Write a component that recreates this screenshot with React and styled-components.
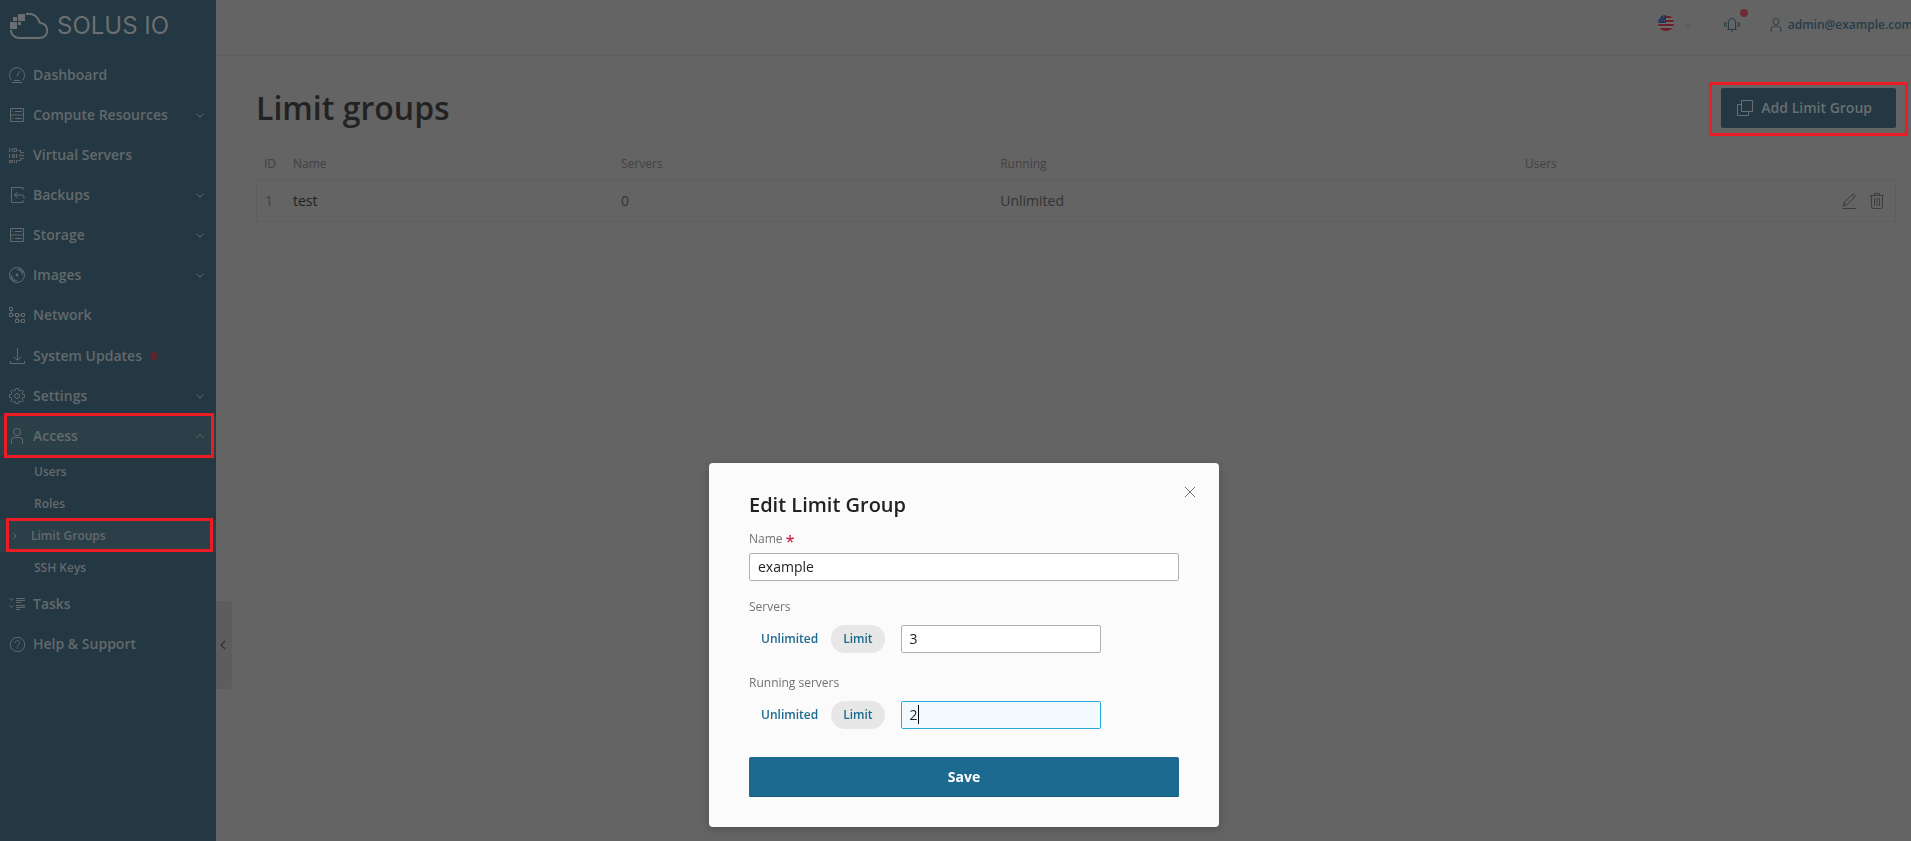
import React from 'react';
import styled, { createGlobalStyle, css } from 'styled-components';

const GlobalStyles = createGlobalStyle`
  :root {
    --page: #646464;
    --line: #5e5e5e;
    --dark-text: #222222;
    --body-text: #333333;
    --muted: #424242;
    --sidebar: #233842;
    --sidebar-active: #2b3f49;
    --sidebar-text: #64696c;
    --header-text: #263d48;
    --accent: #1c6a90;
    --mark: #ed1c24;
  }
  * {
    box-sizing: border-box;
  }
  body {
    margin: 0;
    background: var(--page);
    color: var(--body-text);
    font-family: 'Open Sans', 'Noto Sans', sans-serif;
    font-size: 14px;
    line-height: 20px;
    overflow: hidden;
  }
  button, input {
    font: inherit;
  }
  button {
    border: 0;
    padding: 0;
    background: none;
    color: inherit;
  }
  a {
    color: inherit;
    text-decoration: none;
  }
  ul {
    list-style: none;
    margin: 0;
    padding: 0;
  }
`;

const LayoutStyles = styled.div`
  display: flex;
  min-height: 100vh;
`;

/* ---------- icons ---------- */

const Svg = styled.svg`
  display: block;
  flex: none;
  fill: none;
  stroke: currentColor;
  stroke-width: 1;
`;

function Icon({ name, size = 16 }) {
  return (
    <Svg width={size} height={size} viewBox="0 0 16 16" aria-hidden="true">
      {icons[name]}
    </Svg>
  );
}

const rack = (
  <>
    <path d="M1.5 1.5h13v13h-13z" />
    <path d="M2 7h12v2H2z" fill="currentColor" stroke="none" opacity=".45" />
    <path d="M3 4.5h1M6 4.5h7M3 11.5h1M6 11.5h7" />
  </>
);

const icons = {
  dashboard: (
    <>
      <path d="M2.600 13.400A7.500 7.500 0 1 1 13.400 13.400M3 15.500h10M5 13.500h6" />
      <path d="M8 8.600 11 4" />
      <path d="M8 8.500h1" />
    </>
  ),
  compute: rack,
  storage: rack,
  servers: (
    <>
      <path d="M.5 1v4M3 1v4M5 1.500h2.500v3H5zM.5 7v4M3.500 7.500h2v3h-2zM7.500 7v4M.5 13.500h3v2h-3zM5.500 13v3M7.500 13v3" />
      <path d="M9 3.500h2.500v2H15M9 13.500h2.500v-2H15" />
      <path d="M9.500 8.500H15" strokeWidth="2" opacity=".6" />
    </>
  ),
  backups: (
    <>
      <path d="M14 3V.5H2.500v15H14V13" />
      <path d="M8.500 5 5.500 8l3 3M5.500 8H13a2 2 0 0 1 2 2v1.500" />
    </>
  ),
  images: (
    <>
      <circle cx="8" cy="8" r="7.5" />
      <circle cx="8" cy="8" r="1" fill="currentColor" />
      <path d="M8 2.500a5.500 5.500 0 0 1 5.500 5.500M10 1.500a7 7 0 0 1 4 4.500M8 13.500A5.500 5.500 0 0 1 2.500 8M6 14.500a7 7 0 0 1-4-4.500" />
    </>
  ),
  network: (
    <path d="M.5.5h3v3h-3zM.5 6.500h3v3h-3zM6.500 6.500h3v3h-3zM12.500 6.500h3v3h-3zM6.500 12.500h3v3h-3zM12.500 12.500h3v3h-3zM2 4v2M4 8h2M10 8h2M8 10v2M10 14h2" />
  ),
  updates: <path d="M8.500 0v12M4.500 8.500l4 4 4-4M1.500 13v2.500h14V13" />,
  settings: (
    <>
      <circle cx="8" cy="8" r="2.5" />
      <path d="M6.700.500h2.600l.4 2 1.200.5 1.700-1.100 1.600 1.600L13.100 5.200l.5 1.200 1.900.3v2.600l-1.900.4-.5 1.200 1.100 1.700-1.600 1.600-1.700-1.100-1.200.5-.4 1.900H6.700l-.4-1.900-1.200-.5-1.700 1.100-1.600-1.600 1.100-1.700-.5-1.200-1.900-.4V6.700l1.900-.3.5-1.200L1.800 3.500l1.600-1.600L5.100 3l1.200-.5z" />
    </>
  ),
  user: (
    <>
      <ellipse cx="8" cy="4" rx="3.5" ry="3.6" />
      <path d="M2.500 16v-3.500a3 3 0 0 1 3-3h5a3 3 0 0 1 3 3V16" />
    </>
  ),
  tasks: (
    <>
      <path d="M.5 2.500 2.500 4.500l2-2M.5 9.500l2 2 2-2" />
      <path d="M7 2.500h9M7 4.500h9M7 6.500h5M7 9.500h9M7 11.500h9M7 13.500h4" />
    </>
  ),
  help: (
    <>
      <circle cx="8.500" cy="8.500" r="7.2" />
      <path d="M6.300 6.800a2.200 2.200 0 1 1 3.400 1.800c-.8.5-1.200.8-1.200 1.700M8.500 11.300v1.300" />
    </>
  ),
  chevronDown: <path d="m4.500 6.500 3.500 3.500 3.500-3.500" />,
  chevronUp: <path d="M4.500 10 8 6.500l3.500 3.500" />,
  chevronRight: <path d="m6.500 5.500 2.500 2.500-2.500 2.500" />,
  chevronLeft: <path d="M9 4 5 8l4 4" strokeWidth="1.3" />,
  bell: (
    <>
      <path d="M3 12.500h10M4.500 12.500V5.500A3.500 3.500 0 0 1 8 1.500a3.500 3.500 0 0 1 3.500 4v7M7 14h2" />
      <path d="M2.500 5q-1 2.500 0 5M.7 5.500q-.6 2 0 4M13.500 5q1 2.500 0 5M15.300 5.500q.6 2 0 4" />
    </>
  ),
  copy: <path d="M4.500.5h11v11h-11zM4 4.500H.5v11h11V12" />,
  pencil: (
    <path d="M1.500 15.500h14M2 13l1-3.500L12 .8 14.500 3.300 5.500 12zM3 9.500 5.500 12M10.500 2.300 13 4.800" />
  ),
  trash: (
    <path d="M1 2.500h14M5.500 2.500v-2h5v2M2.500 3v10.500a2 2 0 0 0 2 2h7a2 2 0 0 0 2-2V3M5.500 5v8M8 5v8M10.500 5v8" />
  ),
  close: <path d="m3 3 10 10M13 3 3 13" />,
};

/* ---------- sidebar ---------- */

// red frame drawn round the parts that the reader has to click
const marked = css`
  position: relative;
  &::after {
    content: '';
    position: absolute;
    border: 3px solid var(--mark);
    pointer-events: none;
  }
`;

const SidebarStyles = styled.aside`
  flex: none;
  position: relative;
  width: 216px;
  background: var(--sidebar);
  color: var(--sidebar-text);
`;

const Logo = styled.a`
  display: flex;
  align-items: center;
  gap: 8px;
  height: 55px;
  padding: 0 0 4px 10px;
  color: #6b6f71;
  font-family: Inter, sans-serif;
  font-size: 24px;
  font-weight: 400;
`;

const itemStyles = css`
  display: flex;
  align-items: center;
  width: 100%;
  font-weight: 600;
  text-align: left;
`;

const NavItem = styled.a`
  ${itemStyles}
  gap: 8px;
  height: ${({ $tall }) => ($tall ? 41 : 40)}px;
  padding: 0 8px 0 9px;
  .chevron {
    margin-left: auto;
  }
  ${({ $active }) =>
    $active &&
    css`
      ${marked}
      background: var(--sidebar-active);
      &::after {
        inset: -3px 2px -2px 4px;
      }
    `}
`;

const SubItem = styled.a`
  ${itemStyles}
  height: 32px;
  padding-left: 34px;
  font-size: 12px;
  ${({ $active }) =>
    $active &&
    css`
      ${marked}
      gap: 8px;
      padding-left: 7px;
      background: var(--sidebar-active);
      &::after {
        inset: -2px 3px 0 6px;
      }
    `}
`;

const UpdateDot = styled.span`
  width: 8px;
  height: 8px;
  border-radius: 50%;
  background: #57262f;
`;

const CollapseButton = styled.button`
  position: absolute;
  top: 601px;
  left: 100%;
  width: 16px;
  height: 88px;
  border-radius: 0 4px 4px 0;
  background: #5d5d5d;
  color: #303030;
`;

const menu = [
  { label: 'Dashboard', icon: 'dashboard' },
  { label: 'Compute Resources', icon: 'compute', chevron: 'chevronDown' },
  { label: 'Virtual Servers', icon: 'servers' },
  { label: 'Backups', icon: 'backups', chevron: 'chevronDown' },
  { label: 'Storage', icon: 'storage', chevron: 'chevronDown' },
  { label: 'Images', icon: 'images', chevron: 'chevronDown' },
  { label: 'Network', icon: 'network' },
  { label: 'System Updates', icon: 'updates', dot: true },
  { label: 'Settings', icon: 'settings', chevron: 'chevronDown' },
  {
    label: 'Access',
    icon: 'user',
    chevron: 'chevronUp',
    active: true,
    children: ['Users', 'Roles', 'Limit Groups', 'SSH Keys'],
  },
  { label: 'Tasks', icon: 'tasks' },
  { label: 'Help & Support', icon: 'help' },
];

function Sidebar() {
  return (
    <SidebarStyles>
      <Logo href="#">
        <Svg width="39" height="28" viewBox="0 0 39 28" aria-hidden="true">
          <path
            d="M16 1.900C23 .600 28 4.500 29.500 10.500C34.500 11.500 37.200 14.500 37.200 18.500C37.200 23 34 26 29.500 26H9.500C4.500 26 1 22.500 1 18"
            strokeWidth="2"
          />
          <path
            d="M8 2h7v7H8zM3 5h4v4H3zM0 10h7v7H0zM8 10h3v3H8z"
            fill="currentColor"
            stroke="none"
          />
        </Svg>
        <span>SOLUS IO</span>
      </Logo>
      <nav>
        <ul>
          {menu.map((item) => (
            <li key={item.label}>
              <NavItem href="#" $active={item.active} $tall={item.dot}>
                <Icon name={item.icon} />
                {item.label}
                {item.dot && <UpdateDot />}
                {item.chevron && (
                  <span className="chevron">
                    <Icon name={item.chevron} />
                  </span>
                )}
              </NavItem>
              {item.children && (
                <ul>
                  {item.children.map((child) => (
                    <li key={child}>
                      <SubItem href="#" $active={child === 'Limit Groups'}>
                        {child === 'Limit Groups' && <Icon name="chevronRight" />}
                        {child}
                      </SubItem>
                    </li>
                  ))}
                </ul>
              )}
            </li>
          ))}
        </ul>
      </nav>
      <CollapseButton aria-label="Collapse menu">
        <Icon name="chevronLeft" />
      </CollapseButton>
    </SidebarStyles>
  );
}

/* ---------- header ---------- */

const MainStyles = styled.div`
  flex: 1;
  min-width: 0;
`;

const HeaderStyles = styled.header`
  display: flex;
  align-items: center;
  justify-content: flex-end;
  height: 56px;
  padding-bottom: 6px;
  border-bottom: 1px solid var(--line);
  color: var(--header-text);
  white-space: nowrap;
`;

const Language = styled.button`
  display: flex;
  align-items: center;
  gap: 8px;
  margin-right: 30px;
  color: #474747;
  svg:first-child {
    margin-bottom: 4px;
  }
`;

const Bell = styled.button`
  position: relative;
  margin-right: 29px;
  &::after {
    content: '';
    position: absolute;
    top: -8px;
    right: -8px;
    width: 8px;
    height: 8px;
    border-radius: 50%;
    background: #6f2c37;
  }
`;

const Account = styled.a`
  display: flex;
  align-items: center;
  gap: 5px;
  margin-right: -2px;
  font-size: 12px;
  font-weight: 600;
`;

function Flag() {
  return (
    <svg width="16" height="16" viewBox="0 0 16 16" aria-hidden="true">
      <clipPath id="flag">
        <circle cx="8" cy="8" r="8" />
      </clipPath>
      <g clipPath="url(#flag)">
        <path d="M0 0h16v16H0z" fill="#6c6c6c" />
        <path d="M0 1h16v2H0zM0 5h16v2H0zM0 9h16v2H0zM0 13h16v3H0z" fill="#6b1f2a" />
        <path d="M0 0h8v8H0z" fill="#1f3557" />
        <path d="M2 3h1M5 2h1M4 5h1M6 6h1M1 6h1" stroke="#5f6a7a" />
      </g>
    </svg>
  );
}

function Header() {
  return (
    <HeaderStyles>
      <Language aria-label="Language">
        <Flag />
        <Icon name="chevronDown" size={12} />
      </Language>
      <Bell aria-label="Notifications">
        <Icon name="bell" />
      </Bell>
      <Account href="#">
        <Icon name="user" size={14} />
        admin@example.com
      </Account>
    </HeaderStyles>
  );
}

/* ---------- page ---------- */

const PageStyles = styled.main`
  padding: 32px 15px 32px 40px;
`;

const TitleRow = styled.div`
  display: flex;
  align-items: center;
  justify-content: space-between;
  h1 {
    margin: 0;
    color: var(--dark-text);
    font-size: 32px;
    line-height: 40px;
    font-weight: 600;
  }
`;

const AddButton = styled.button`
  ${marked}
  display: flex;
  align-items: center;
  gap: 8px;
  height: 40px;
  padding: 0 24px 0 16px;
  border-radius: 2px;
  background: var(--sidebar);
  color: #6a6f72;
  font-weight: 600;
  &::after {
    inset: -6px -12px -8px -12px;
  }
`;

const Table = styled.table`
  width: 100%;
  margin-top: 20px;
  table-layout: fixed;
  border-collapse: separate;
  border-spacing: 0;
  th,
  td {
    padding: 0 8px;
    text-align: left;
  }
  th {
    height: 32px;
    color: var(--muted);
    font-size: 12px;
    font-weight: 400;
  }
  td {
    height: 42px;
    border: solid var(--line);
    border-width: 1px 0;
  }
  td:first-child {
    border-left-width: 1px;
    color: var(--muted);
  }
  td:last-child {
    border-right-width: 1px;
  }
  .id {
    width: 29px;
    padding-right: 0;
  }
  .name {
    width: 20%;
  }
  td.name {
    color: var(--dark-text);
  }
  .running {
    width: 32%;
  }
  .users {
    width: 200px;
  }
  .actions {
    width: 179px;
  }
`;

const Actions = styled.div`
  display: flex;
  justify-content: flex-end;
  gap: 12px;
  padding-right: 2px;
  color: #3c3c3c;
`;

function LimitGroups() {
  return (
    <PageStyles>
      <TitleRow>
        <h1>Limit groups</h1>
        <AddButton>
          <Icon name="copy" />
          Add Limit Group
        </AddButton>
      </TitleRow>
      <Table>
        <thead>
          <tr>
            <th className="id">ID</th>
            <th className="name">Name</th>
            <th>Servers</th>
            <th className="running">Running</th>
            <th className="users">Users</th>
            <th className="actions" aria-label="Actions" />
          </tr>
        </thead>
        <tbody>
          <tr>
            <td>1</td>
            <td className="name">test</td>
            <td>0</td>
            <td>Unlimited</td>
            <td />
            <td>
              <Actions>
                <button aria-label="Edit">
                  <Icon name="pencil" />
                </button>
                <button aria-label="Delete">
                  <Icon name="trash" />
                </button>
              </Actions>
            </td>
          </tr>
        </tbody>
      </Table>
    </PageStyles>
  );
}

/* ---------- dialog ---------- */

const Overlay = styled.div`
  position: fixed;
  inset: 0;
  display: flex;
  align-items: flex-end;
  justify-content: center;
  padding: 0 0 14px 17px;
`;

const Dialog = styled.form`
  position: relative;
  width: 510px;
  padding: 28px 40px 30px;
  border-radius: 4px;
  background: #fbfbfb;
  box-shadow: 0 2px 8px rgba(0, 0, 0, 0.2);
  h2 {
    margin: 0 0 11px;
    color: var(--dark-text);
    font-size: 20px;
    line-height: 28px;
    font-weight: 600;
  }
`;

const CloseButton = styled.button`
  position: absolute;
  top: 21px;
  right: 21px;
  color: #777777;
`;

const Label = styled.label`
  display: block;
  margin-bottom: ${({ $gap = 5 }) => $gap}px;
  color: #737373;
  font-size: 12px;
  line-height: 18px;
  span {
    color: #d0284c;
    font-size: 16px;
    font-weight: 600;
    line-height: 12px;
    vertical-align: -4px;
  }
`;

const Input = styled.input`
  display: block;
  width: 100%;
  height: 28px;
  padding: 0 8px 2px;
  border: 1px solid ${({ $focused }) => ($focused ? '#28aade' : '#b0b0b0')};
  border-radius: 2px;
  outline: 0;
  background: ${({ $focused }) => ($focused ? '#f2f9ff' : '#ffffff')};
  color: var(--dark-text);
`;

const LimitRow = styled.div`
  display: flex;
  margin-bottom: ${({ $last }) => ($last ? 28 : 21)}px;
`;

const Pill = styled.button`
  height: 28px;
  padding: 0 12px;
  border-radius: 14px;
  background: ${({ $selected }) => ($selected ? '#e7e7e7' : 'transparent')};
  color: var(--accent);
  font-size: 12px;
  font-weight: 600;
  & + & {
    margin-left: 1px;
  }
`;

const InputWrap = styled.div`
  position: relative;
  width: 200px;
  margin-left: 16px;
`;

const Caret = styled.span`
  position: absolute;
  top: 4px;
  left: 17px;
  width: 1px;
  height: 19px;
  background: #000000;
`;

const SaveButton = styled.button`
  display: block;
  width: 100%;
  height: 40px;
  border-radius: 2px;
  background: var(--accent);
  box-shadow: inset 0 -1px 0 #185a7b;
  color: #ffffff;
  font-weight: 700;
`;

function LimitField({ id, label, value, focused, last }) {
  return (
    <>
      <Label htmlFor={id} $gap={9}>{label}</Label>
      <LimitRow $last={last}>
        <Pill type="button">Unlimited</Pill>
        <Pill type="button" $selected aria-pressed="true">Limit</Pill>
        <InputWrap>
          <Input id={id} defaultValue={value} $focused={focused} />
          {focused && <Caret />}
        </InputWrap>
      </LimitRow>
    </>
  );
}

const NameField = styled.div`
  margin-bottom: 17px;
`;

function EditDialog() {
  return (
    <Overlay>
      <Dialog role="dialog" aria-labelledby="dialog-title" onSubmit={(e) => e.preventDefault()}>
        <CloseButton type="button" aria-label="Close">
          <Icon name="close" />
        </CloseButton>
        <h2 id="dialog-title">Edit Limit Group</h2>
        <NameField>
          <Label htmlFor="name">
            Name <span>*</span>
          </Label>
          <Input id="name" defaultValue="example" />
        </NameField>
        <LimitField id="servers" label="Servers" value="3" />
        <LimitField id="running" label="Running servers" value="2" focused last />
        <SaveButton>Save</SaveButton>
      </Dialog>
    </Overlay>
  );
}

export default function App() {
  return (
    <>
      <GlobalStyles />
      <LayoutStyles>
        <Sidebar />
        <MainStyles>
          <Header />
          <LimitGroups />
        </MainStyles>
      </LayoutStyles>
      <EditDialog />
    </>
  );
}
